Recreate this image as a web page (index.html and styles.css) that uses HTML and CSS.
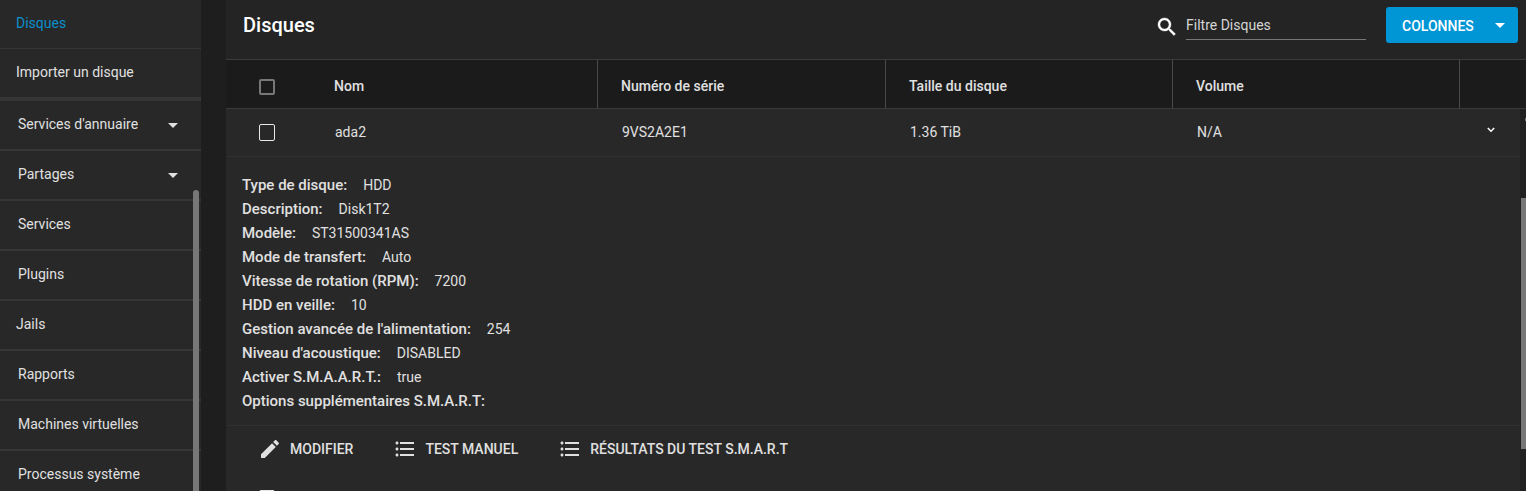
FILE: index.html
```
<!DOCTYPE html>
<html lang="fr">
<head>
    <meta charset="UTF-8">
    <meta name="viewport" content="width=device-width, initial-scale=1.0">
    <title>Disques</title>
    <link rel="stylesheet" href="styles.css">
</head>
<body>
    <nav class="sidebar">
        <ul class="menu">
            <li class="sub active">Disques</li>
            <li class="sub last">Importer un disque</li>
            <li>Services d'annuaire <span class="caret"></span></li>
            <li>Partages <span class="caret"></span></li>
            <li>Services</li>
            <li>Plugins</li>
            <li class="jails">Jails</li>
            <li>Rapports</li>
            <li>Machines virtuelles</li>
            <li>Processus système</li>
        </ul>
        <div class="menu-scroll"></div>
    </nav>

    <main class="content">
        <header class="toolbar">
            <h1>Disques</h1>
            <svg class="search-icon" viewBox="0 0 24 24"><path d="M15.5 14h-.79l-.28-.27C15.41 12.59 16 11.11 16 9.5 16 5.91 13.09 3 9.5 3S3 5.91 3 9.5 5.91 16 9.5 16c1.61 0 3.09-.59 4.23-1.57l.27.28v.79l5 4.99L20.49 19l-4.99-5zm-6 0C7.01 14 5 11.99 5 9.5S7.01 5 9.5 5 14 7.01 14 9.5 11.99 14 9.5 14z"/></svg>
            <input type="text" class="filter" placeholder="Filtre Disques">
            <button class="columns-btn">COLONNES <span class="caret"></span></button>
        </header>

        <div class="row head">
            <div class="check"><span class="box"></span></div>
            <div class="cell name">Nom</div>
            <div class="cell">Numéro de série</div>
            <div class="cell">Taille du disque</div>
            <div class="cell">Volume</div>
            <div></div>
        </div>

        <div class="table-wrap">
            <div class="table-body">
                <div class="row disk">
                    <div class="check"><span class="box"></span></div>
                    <div class="cell name">ada2</div>
                    <div class="cell">9VS2A2E1</div>
                    <div class="cell">1.36 TiB</div>
                    <div class="cell">N/A</div>
                    <div class="expand">
                        <svg viewBox="0 0 8 6"><path d="M0.8 1l3.2 3.2L7.2 1"/></svg>
                    </div>
                </div>

                <dl class="details">
                    <div><dt>Type de disque:</dt><dd>HDD</dd></div>
                    <div><dt>Description:</dt><dd>Disk1T2</dd></div>
                    <div><dt>Modèle:</dt><dd>ST31500341AS</dd></div>
                    <div><dt>Mode de transfert:</dt><dd>Auto</dd></div>
                    <div><dt>Vitesse de rotation (RPM):</dt><dd>7200</dd></div>
                    <div><dt>HDD en veille:</dt><dd>10</dd></div>
                    <div><dt>Gestion avancée de l'alimentation:</dt><dd>254</dd></div>
                    <div><dt>Niveau d'acoustique:</dt><dd>DISABLED</dd></div>
                    <div><dt>Activer S.M.A.A.R.T.:</dt><dd>true</dd></div>
                    <div><dt>Options supplémentaires S.M.A.R.T:</dt><dd></dd></div>
                </dl>

                <div class="actions">
                    <button>
                        <svg viewBox="0 0 24 24"><path d="M3 17.25V21h3.75L17.81 9.94l-3.75-3.75L3 17.25zM20.71 7.04c.39-.39.39-1.02 0-1.41l-2.34-2.34c-.39-.39-1.02-.39-1.41 0l-1.83 1.83 3.75 3.75 1.83-1.83z"/></svg>
                        MODIFIER
                    </button>
                    <button>
                        <svg viewBox="0 0 24 24"><path d="M4 10.5c-.83 0-1.5.67-1.5 1.5s.67 1.5 1.5 1.5 1.5-.67 1.5-1.5-.67-1.5-1.5-1.5zm0-6c-.83 0-1.5.67-1.5 1.5S3.17 7.5 4 7.5 5.5 6.83 5.5 6 4.83 4.5 4 4.5zm0 12c-.83 0-1.5.68-1.5 1.5s.68 1.5 1.5 1.5 1.5-.68 1.5-1.5-.67-1.5-1.5-1.5zM7 19h14v-2H7v2zm0-6h14v-2H7v2zm0-8v2h14V5H7z"/></svg>
                        TEST MANUEL
                    </button>
                    <button>
                        <svg viewBox="0 0 24 24"><path d="M4 10.5c-.83 0-1.5.67-1.5 1.5s.67 1.5 1.5 1.5 1.5-.67 1.5-1.5-.67-1.5-1.5-1.5zm0-6c-.83 0-1.5.67-1.5 1.5S3.17 7.5 4 7.5 5.5 6.83 5.5 6 4.83 4.5 4 4.5zm0 12c-.83 0-1.5.68-1.5 1.5s.68 1.5 1.5 1.5 1.5-.68 1.5-1.5-.67-1.5-1.5-1.5zM7 19h14v-2H7v2zm0-6h14v-2H7v2zm0-8v2h14V5H7z"/></svg>
                        RÉSULTATS DU TEST S.M.A.R.T
                    </button>
                </div>

                <div class="row disk next">
                    <div class="check"><span class="box"></span></div>
                </div>
            </div>
            <div class="table-scroll">
                <span class="arrow"></span>
                <span class="thumb"></span>
            </div>
        </div>
    </main>
</body>
</html>
```
FILE: styles.css
```
* {
    box-sizing: border-box;
}
body {
    margin: 0;
    height: 491px;
    display: flex;
    overflow: hidden;
    background-color: #1e1e1e;
    color: #e0e0e0;
    font-family: Roboto, sans-serif;
    font-size: 14px;
}

/* Menu */
.sidebar {
    position: relative;
    width: 201px;
    height: 491px;
    margin-right: 25px;
    overflow: hidden;
    background-color: #282828;
}
.menu {
    list-style: none;
    margin: 0;
    padding: 0;
}
.menu li {
    display: flex;
    align-items: center;
    justify-content: space-between;
    height: 50px;
    padding: 0 23px 2px 18px;
    border-bottom: 2px solid #363636;
}
.menu li.sub {
    height: 49px;
    padding: 0 16px 2px;
    border-bottom: 1px solid #363636;
}
.menu li.last {
    height: 52px;
    border-bottom: 4px solid #363636;
}
.menu li.jails {
    padding-left: 16px;
}
.menu li.active {
    color: #0b8fcb;
}
.menu-scroll {
    position: absolute;
    top: 190px;
    right: 2px;
    bottom: 0;
    width: 6px;
    border-radius: 3px 3px 0 0;
    background-color: #777777;
}
.caret {
    border: 5px solid transparent;
    border-top-color: currentColor;
    border-bottom: 0;
}
.menu .caret {
    margin-top: 3px;
}

/* Toolbar */
.content {
    flex: 1;
    min-width: 0;
    background-color: #242424;
}
.toolbar {
    display: flex;
    align-items: center;
    height: 60px;
    padding: 0 8px 9px 17px;
    border-bottom: 1px solid #3a3a3a;
}
.toolbar h1 {
    flex: 1;
    margin: 0;
    color: #ffffff;
    font-size: 20px;
    font-weight: 500;
}
.search-icon {
    width: 24px;
    height: 24px;
    margin: 3px 7px 0 0;
    fill: #ffffff;
    stroke: #ffffff;
    stroke-width: 0.4;
}
.filter {
    width: 180px;
    height: 30px;
    margin: 0 20px 0 0;
    padding: 0;
    border: 0;
    border-bottom: 1px solid #777777;
    background: none;
    font: inherit;
}
.filter::placeholder {
    color: #d5d5d5;
}
.columns-btn {
    display: flex;
    align-items: center;
    justify-content: space-between;
    width: 132px;
    height: 36px;
    padding: 2px 13px 0 16px;
    border: 0;
    border-radius: 3px;
    background-color: #0095d5;
    color: #ffffff;
    font: 500 14px Roboto, sans-serif;
}
.columns-btn .caret {
    margin-bottom: 1px;
}

/* Table */
.row {
    display: grid;
    grid-template-columns: 84px 288px 288px 287px 287px 1fr;
    height: 49px;
}
.row > div {
    display: flex;
    align-items: center;
}
.head {
    background-color: #1b1b1b;
    border-bottom: 1px solid #3a3a3a;
    font-weight: 500;
}
.head .cell {
    padding: 4px 0 0 23px;
    border-right: 1px solid #4a4a4a;
}
.head .name {
    padding-left: 24px;
}
.row .check {
    padding-left: 33px;
}
.box {
    width: 16px;
    height: 16px;
    border: 2px solid #777777;
    border-radius: 2px;
}
.head .box {
    margin-top: 6px;
}
.table-wrap {
    display: flex;
    height: 382px;
}
.table-body {
    flex: 1;
    overflow: hidden;
    background-color: #282828;
}
.disk {
    height: 48px;
    border-bottom: 1px solid #303030;
}
.disk .cell {
    padding: 0 0 1px 24px;
}
.disk .name {
    padding-left: 25px;
}
.disk .box {
    height: 17px;
    border: 1px solid #e8e8e8;
}
.next .box {
    margin-top: 4px;
}
.expand {
    padding: 0 0 5px 27px;
}
.expand svg {
    width: 8px;
    height: 6px;
    fill: none;
    stroke: #ffffff;
    stroke-width: 1.5;
}
.details {
    height: 269px;
    margin: 0;
    padding: 16px;
    border-bottom: 1px solid #303030;
}
.details div {
    display: flex;
    line-height: 24px;
}
.details dt {
    font-size: 15px;
    font-weight: 500;
}
.details dd {
    margin: 0 0 0 16px;
}
.actions {
    display: flex;
    height: 47px;
    padding: 0 0 2px 32px;
}
.actions button {
    display: flex;
    align-items: center;
    gap: 8px;
    margin-right: 40px;
    padding: 0;
    border: 0;
    background: none;
    color: #e0e0e0;
    font: 500 14px Roboto, sans-serif;
}
.actions svg {
    width: 24px;
    height: 24px;
    fill: #e0e0e0;
}
.table-scroll {
    position: relative;
    width: 6px;
    background-color: #212121;
}
.table-scroll .arrow {
    position: absolute;
    top: 9px;
    right: 0;
    width: 1px;
    height: 3px;
    background-color: #777777;
}
.table-scroll .thumb {
    position: absolute;
    top: 89px;
    right: 0;
    width: 5px;
    height: 251px;
    background-color: #777777;
}
```
